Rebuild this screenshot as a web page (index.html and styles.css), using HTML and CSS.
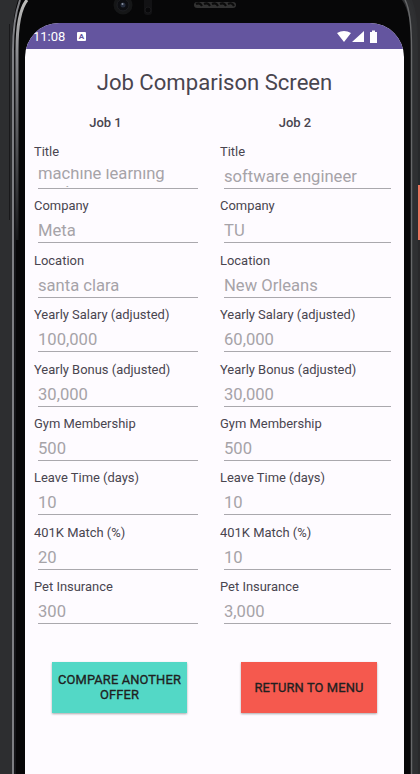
FILE: index.html
```
<!DOCTYPE html>
<html lang="en">
<head>
<meta charset="utf-8">
<title>Job Comparison Screen</title>
<link rel="stylesheet" href="styles.css">
</head>
<body>
<svg class="frame" width="420" height="774" viewBox="0 0 420 774" fill="none">
  <defs>
    <linearGradient id="shine" x1="0" y1="0" x2="0" y2="240" gradientUnits="userSpaceOnUse"><stop stop-color="#bdbdbb"/><stop offset=".25" stop-color="#85868a"/><stop offset="1" stop-color="#17181a"/></linearGradient>
  </defs>
  <path d="M412 0Q418 14 418 40V774h2V0Z" fill="#29292b"/>
  <path d="M18 0Q12 18 12 50V774H412V50Q412 14 402 0Z" fill="#070708"/>
  <path d="M9.500 24V220" stroke="#19191b"/>
  <path d="M20 0Q13 20 13 50V774" stroke="#7e7f83" stroke-width="2"/>
  <path d="M15 50V774" stroke="#252528"/>
  <path d="M27 0Q17 12 17 50V240" stroke="url(#shine)" stroke-width="3"/>
  <path d="M406 0Q415 12 415 50V774" stroke="#2f3032" stroke-width="5"/>
  <path d="M405 0Q411.500 12 411.500 50V774" stroke="#666769" stroke-width="1.500"/>
</svg>
<div class="power-key"></div>
<div class="phone">
  <div class="hardware">
    <svg width="140" height="23" viewBox="0 0 140 23">
      <circle cx="20" cy="5" r="9.500" fill="#151617"/><circle cx="20" cy="5" r="6" fill="#0d0e12" stroke="#1e1f23"/><circle cx="20" cy="5" r="2.500" fill="#252c3c"/><circle cx="19.500" cy="4" r="1" fill="#8a93a3"/>
      <rect x="41" y="-5" width="8" height="20" rx="3" fill="#121214"/><circle cx="45" cy="10" r="3" fill="#08080a" stroke="#19191b"/>
      <rect x="91" y="2" width="42" height="6" rx="3" fill="#323232"/><path d="M93 4q4-2 6 2M101 4q4-2 6 2M109 4q4-2 6 2M117 4q4-2 6 2M125 4q4-2 6 2" fill="none" stroke="#0b0b0b" stroke-width="2"/>
    </svg>
  </div>
  <main class="screen">
    <header class="status">
      <span class="clock">11:08</span>
      <span class="app-icon">A</span>
      <svg class="signals" width="42" height="14" viewBox="0 0 42 14" fill="#fff">
        <path d="M0 3Q7-1 14 3L7 12ZM15 12L27 1v11ZM33 2h2V.500h3V2h2v11h-7Z"/>
      </svg>
    </header>
    <h1>Job Comparison Screen</h1>
    <div class="jobs">
      <section class="job">
        <h2>Job 1</h2>
        <div class="field"><label>Title</label><div class="value multiline"><div class="scrolled">machine learning<br>engineer</div></div></div>
        <div class="field"><label>Company</label><div class="value">Meta</div></div>
        <div class="field"><label>Location</label><div class="value">santa clara</div></div>
        <div class="field"><label>Yearly Salary (adjusted)</label><div class="value">100,000</div></div>
        <div class="field"><label>Yearly Bonus (adjusted)</label><div class="value">30,000</div></div>
        <div class="field"><label>Gym Membership</label><div class="value">500</div></div>
        <div class="field"><label>Leave Time (days)</label><div class="value">10</div></div>
        <div class="field"><label>401K Match (%)</label><div class="value">20</div></div>
        <div class="field"><label>Pet Insurance</label><div class="value">300</div></div>
      </section>
      <section class="job">
        <h2>Job 2</h2>
        <div class="field"><label>Title</label><div class="value">software engineer</div></div>
        <div class="field"><label>Company</label><div class="value">TU</div></div>
        <div class="field"><label>Location</label><div class="value">New Orleans</div></div>
        <div class="field"><label>Yearly Salary (adjusted)</label><div class="value">60,000</div></div>
        <div class="field"><label>Yearly Bonus (adjusted)</label><div class="value">30,000</div></div>
        <div class="field"><label>Gym Membership</label><div class="value">500</div></div>
        <div class="field"><label>Leave Time (days)</label><div class="value">10</div></div>
        <div class="field"><label>401K Match (%)</label><div class="value">10</div></div>
        <div class="field"><label>Pet Insurance</label><div class="value">3,000</div></div>
      </section>
    </div>
    <div class="actions">
      <button class="compare">COMPARE ANOTHER<br>OFFER</button>
      <button class="return">RETURN TO MENU</button>
    </div>
  </main>
</div>
</body>
</html>
```
FILE: styles.css
```
* { box-sizing: border-box; }
body { margin: 0; height: 774px; overflow: hidden; background: #2d2e30; font-family: Roboto, sans-serif; color: #49454f; }
.frame { position: absolute; inset: 0; z-index: -1; }
.phone { width: 379px; height: 774px; margin-left: 25px; overflow: hidden; }
.hardware { height: 23px; padding-left: 78px; }
.hardware svg { display: block; }
.screen { width: 379px; height: 751px; overflow: hidden; border-radius: 34px 34px 0 0; background: #fefbff; }
.status { display: flex; height: 26px; padding: 1px 25px 0 8px; align-items: center; background: #64559f; color: #fff; }
.clock { width: 44px; font-size: 13px; }
.app-icon { width: 9px; height: 9px; border-radius: 1px; background: #fff; color: #64559f; font-size: 8px; line-height: 9px; font-weight: 700; text-align: center; }
.signals { margin-left: auto; }
h1 { margin: 18px 0 0; height: 30px; font-size: 22.1px; line-height: 30px; font-weight: 400; text-align: center; }
.jobs { display: flex; margin: 18px 13px 0 9px; gap: 17px; }
.job { width: 169px; }
.job + .job { width: 171px; }
h2 { margin: 0 0 7px; height: 17px; font-size: 13px; line-height: 16px; font-weight: 500; text-align: center; }
.job:first-child h2 { padding-right: 26px; }
.job + .job h2 { padding-right: 21px; }
.field { height: 54.4px; padding-top: 4px; }
label { display: block; height: 18px; font-size: 12.95px; line-height: 18px; }
.value { height: 26px; margin: 2px 0 0 4px; padding-top: 4px; overflow: hidden; width: 160px; border-bottom: 1px solid #aaa8ad; font-size: 16.6px; line-height: 20px; color: #a6a3a8; }
.job + .job .value { width: 167px; }
.multiline { padding-top: 6px; }
.scrolled { height: 18px; overflow: hidden; line-height: 19px; text-indent: 0; display: flex; align-items: flex-start; }
.scrolled { display: block; }
.scrolled::before { content: ""; display: block; margin-top: -5px; }
.actions { display: flex; margin: 33px 27px 0; justify-content: space-between; }
button { width: 136px; height: 51px; padding: 0; border: 0; font: 400 12.9px/15px Roboto, sans-serif; letter-spacing: .12px; -webkit-text-stroke: .3px #202020; color: #202020; box-shadow: 0 1px 2px #0005; }
.compare { width: 135px; background: #53d8c6; }
.return { background: #f5594e; }
.power-key { position: absolute; top: 185px; right: 0; width: 2px; height: 55px; background: #ec765f; }
```
